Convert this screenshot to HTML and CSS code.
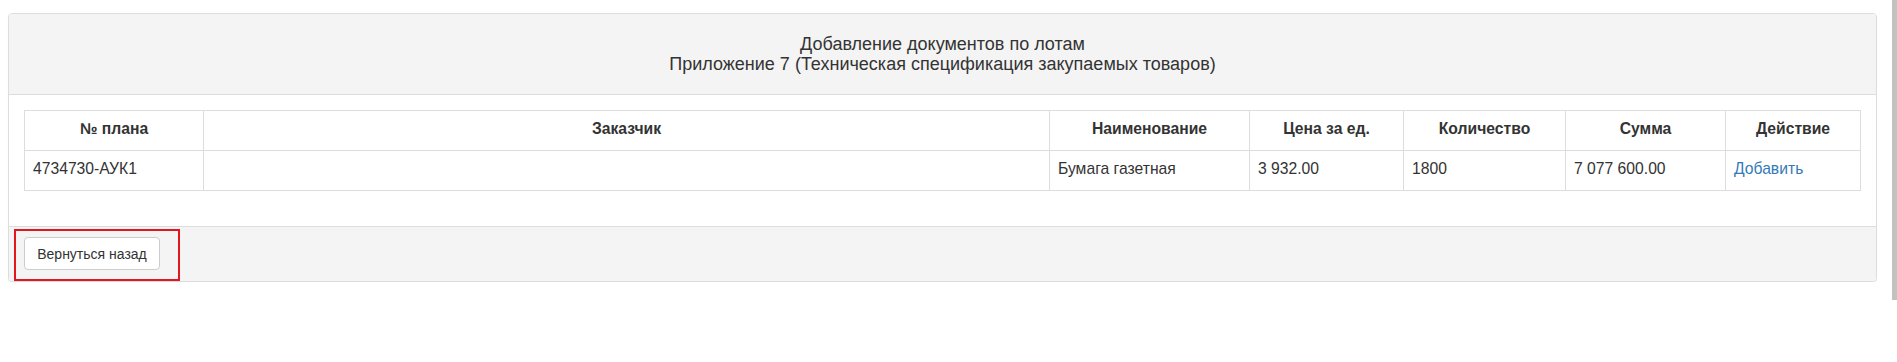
FILE: index.html
```html
<!DOCTYPE html>
<html lang="ru">
<head>
<meta charset="utf-8">
<title>Добавление документов по лотам</title>
<link rel="stylesheet" href="styles.css">
</head>
<body>
<div class="panel">
  <div class="panel-heading">
    <div class="panel-title">Добавление документов по лотам<br>Приложение 7 (Техническая спецификация закупаемых товаров)</div>
  </div>
  <div class="panel-body">
    <table class="lots">
      <colgroup>
        <col class="c1"><col class="c2"><col class="c3"><col class="c4"><col class="c5"><col class="c6"><col class="c7">
      </colgroup>
      <thead>
        <tr>
          <th>№ плана</th>
          <th>Заказчик</th>
          <th>Наименование</th>
          <th>Цена за ед.</th>
          <th>Количество</th>
          <th>Сумма</th>
          <th>Действие</th>
        </tr>
      </thead>
      <tbody>
        <tr>
          <td>4734730-АУК1</td>
          <td></td>
          <td>Бумага газетная</td>
          <td>3 932.00</td>
          <td>1800</td>
          <td>7 077 600.00</td>
          <td><a href="#" class="link">Добавить</a></td>
        </tr>
      </tbody>
    </table>
  </div>
  <div class="panel-footer">
    <button class="btn" type="button">Вернуться назад</button>
    <span class="highlight"></span>
  </div>
</div>
<div class="scrollbar"></div>
</body>
</html>
```

FILE: styles.css
```css
html, body {
  margin: 0;
  padding: 0;
  background: #fff;
}
body {
  font-family: "Liberation Sans", Arial, sans-serif;
  font-size: 14px;
  line-height: 20px;
  color: #333;
  padding: 13px 20px 0 8px;
}
.panel {
  border: 1px solid #ddd;
  border-radius: 4px;
  background: #fff;
  box-shadow: 0 1px 1px rgba(0,0,0,0.05);
}
.panel-heading {
  background: #f4f4f4;
  border-bottom: 1px solid #ddd;
  border-radius: 3px 3px 0 0;
  padding: 20px 15px 20px;
  text-align: center;
}
.panel-title {
  font-size: 18px;
  line-height: 20px;
  color: #333;
}
.panel-body {
  padding: 15px 15px 35px;
}
.lots {
  width: 100%;
  border-collapse: collapse;
  table-layout: fixed;
  font-size: 15.7px;
}
.c1 { width: 179px; }
.c2 { width: 846px; }
.c3 { width: 200px; }
.c4 { width: 154px; }
.c5 { width: 162px; }
.c6 { width: 160px; }
.lots th, .lots td {
  border: 1px solid #ddd;
  padding: 8px 8px 11px;
  line-height: 20px;
  height: 20px;
  vertical-align: top;
}
.lots th {
  text-align: center;
  font-weight: bold;
}
.lots td {
  text-align: left;
}
.link {
  color: #337ab7;
  text-decoration: none;
}
.panel-footer {
  position: relative;
  background: #f4f4f4;
  border-top: 1px solid #ddd;
  border-radius: 0 0 3px 3px;
  padding: 10px 15px 11px;
  height: 33px;
}
.btn {
  font-family: "Liberation Sans", Arial, sans-serif;
  font-size: 14px;
  line-height: 20px;
  color: #333;
  background: #fff;
  border: 1px solid #ccc;
  border-radius: 4px;
  padding: 6px 12px 5px;
  height: 33px;
  width: 136px;
  cursor: pointer;
}
.highlight {
  position: absolute;
  left: 5px;
  top: 2px;
  width: 162px;
  height: 48px;
  border: 2px solid #e3161b;
  pointer-events: none;
}
.scrollbar {
  position: fixed;
  top: 0;
  right: 0;
  width: 5px;
  height: 300px;
  background: #c1c1c1;
}
```
